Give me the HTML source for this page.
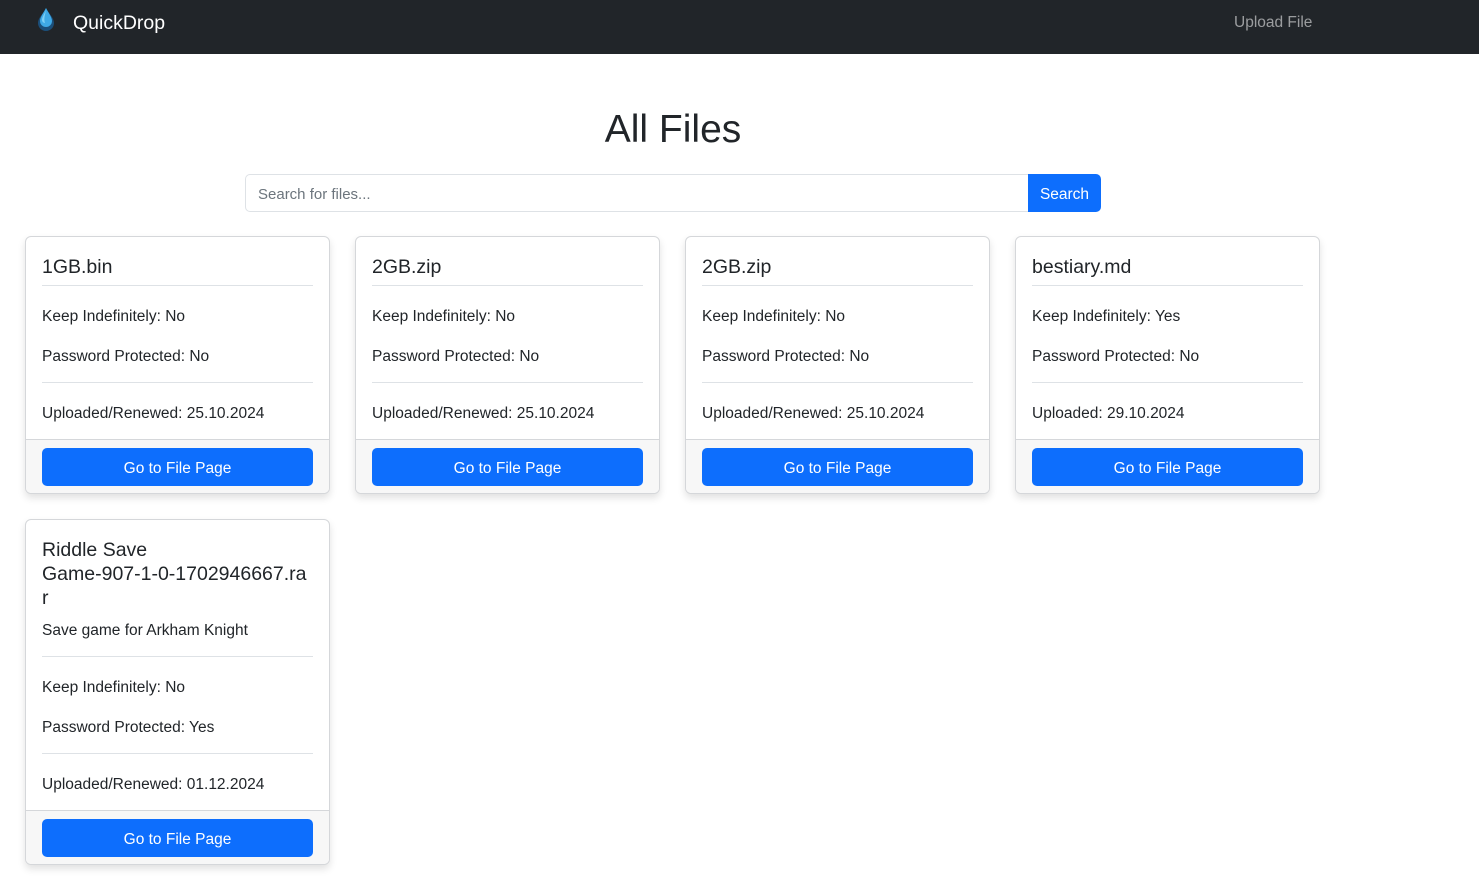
<!DOCTYPE html>
<html><head><meta charset="utf-8"><style>
*{box-sizing:border-box;margin:0;padding:0}
body{width:1479px;height:877px;overflow:hidden;background:#fff;font-family:"Liberation Sans",sans-serif;color:#212529;font-size:15.5px}
.nav{height:54px;background:#212529;position:relative}
.brand{position:absolute;left:73px;top:12px;color:#fff;font-size:19.5px}
.logo{position:absolute;left:37px;top:7px}
.up{position:absolute;left:1234px;top:14px;color:rgba(255,255,255,.55);font-size:15.5px}
h1{position:absolute;left:0;width:1346px;text-align:center;top:108px;font-size:39px;font-weight:400}
.search{position:absolute;left:245px;top:174px;width:856px;height:38px;display:flex}
.search .in{flex:1;border:1px solid #dee2e6;border-right:none;border-radius:5px 0 0 5px;padding:11px 12px 0;color:#6c757d;font-size:15px}
.search .bt{width:73px;background:#0d6efd;color:#fff;border-radius:0 5px 5px 0;text-align:center;line-height:41px;font-size:15.5px}
.card{position:absolute;width:305px;border:1px solid #d5d7da;border-radius:6px;box-shadow:0 4px 8px rgba(0,0,0,.12);background:#fff;overflow:hidden}
.body{padding:16px 16px 0}
.t{font-size:19.5px;line-height:24px;padding-top:2px;padding-bottom:6px;border-bottom:1px solid #dee2e6}
.p{line-height:20px}
.hr{border-top:1px solid #dee2e6}
.foot{background:#f7f7f7;border-top:1px solid #d5d7da;padding:8px 16px 7px}
.btn{background:#0d6efd;color:#fff;border-radius:5px;height:38px;line-height:41px;text-align:center;font-size:15.5px}
</style></head><body>
<div class="nav">
<svg class="logo" width="18" height="26" viewBox="0 0 18 26"><path d="M9 1C6 7 1 11 1 16a8 8 0 0 0 16 0C17 11 12 7 9 1z" fill="#1b4f7a"/><path d="M9 1C6.5 6 3 10 3 14a6 6 0 0 0 12 0C15 10 11.5 6 9 1z" fill="#3fa9e6"/><path d="M9 3C7.5 7 5 10 5 13a3 3 0 0 0 3 3C6.5 12 8 8 9 3z" fill="#7fd0f5"/></svg>
<div class="brand">QuickDrop</div>
<div class="up">Upload File</div>
</div>
<h1>All Files</h1>
<div class="search"><div class="in">Search for files...</div><div class="bt">Search</div></div>

<div class="card" style="left:25px;top:236px"><div class="body"><div class="t">1GB.bin</div><div class="p" style="margin-top:21px">Keep Indefinitely: No</div><div class="p" style="margin-top:20px">Password Protected: No</div><div class="hr" style="margin-top:15px"></div><div class="p" style="margin-top:21px;margin-bottom:15px">Uploaded/Renewed: 25.10.2024</div></div><div class="foot"><div class="btn">Go to File Page</div></div></div>
<div class="card" style="left:355px;top:236px"><div class="body"><div class="t">2GB.zip</div><div class="p" style="margin-top:21px">Keep Indefinitely: No</div><div class="p" style="margin-top:20px">Password Protected: No</div><div class="hr" style="margin-top:15px"></div><div class="p" style="margin-top:21px;margin-bottom:15px">Uploaded/Renewed: 25.10.2024</div></div><div class="foot"><div class="btn">Go to File Page</div></div></div>
<div class="card" style="left:685px;top:236px"><div class="body"><div class="t">2GB.zip</div><div class="p" style="margin-top:21px">Keep Indefinitely: No</div><div class="p" style="margin-top:20px">Password Protected: No</div><div class="hr" style="margin-top:15px"></div><div class="p" style="margin-top:21px;margin-bottom:15px">Uploaded/Renewed: 25.10.2024</div></div><div class="foot"><div class="btn">Go to File Page</div></div></div>
<div class="card" style="left:1015px;top:236px"><div class="body"><div class="t">bestiary.md</div><div class="p" style="margin-top:21px">Keep Indefinitely: Yes</div><div class="p" style="margin-top:20px">Password Protected: No</div><div class="hr" style="margin-top:15px"></div><div class="p" style="margin-top:21px;margin-bottom:15px">Uploaded: 29.10.2024</div></div><div class="foot"><div class="btn">Go to File Page</div></div></div>
<div class="card" style="left:25px;top:519px"><div class="body"><div class="t" style="border:none;padding-bottom:0;white-space:nowrap">Riddle Save<br>Game-907-1-0-1702946667.ra<br>r</div><div class="p" style="margin-top:11px;padding-bottom:15px;border-bottom:1px solid #dee2e6">Save game for Arkham Knight</div><div class="p" style="margin-top:21px">Keep Indefinitely: No</div><div class="p" style="margin-top:20px">Password Protected: Yes</div><div class="hr" style="margin-top:15px"></div><div class="p" style="margin-top:21px;margin-bottom:15px">Uploaded/Renewed: 01.12.2024</div></div><div class="foot"><div class="btn">Go to File Page</div></div></div>
</body></html>
